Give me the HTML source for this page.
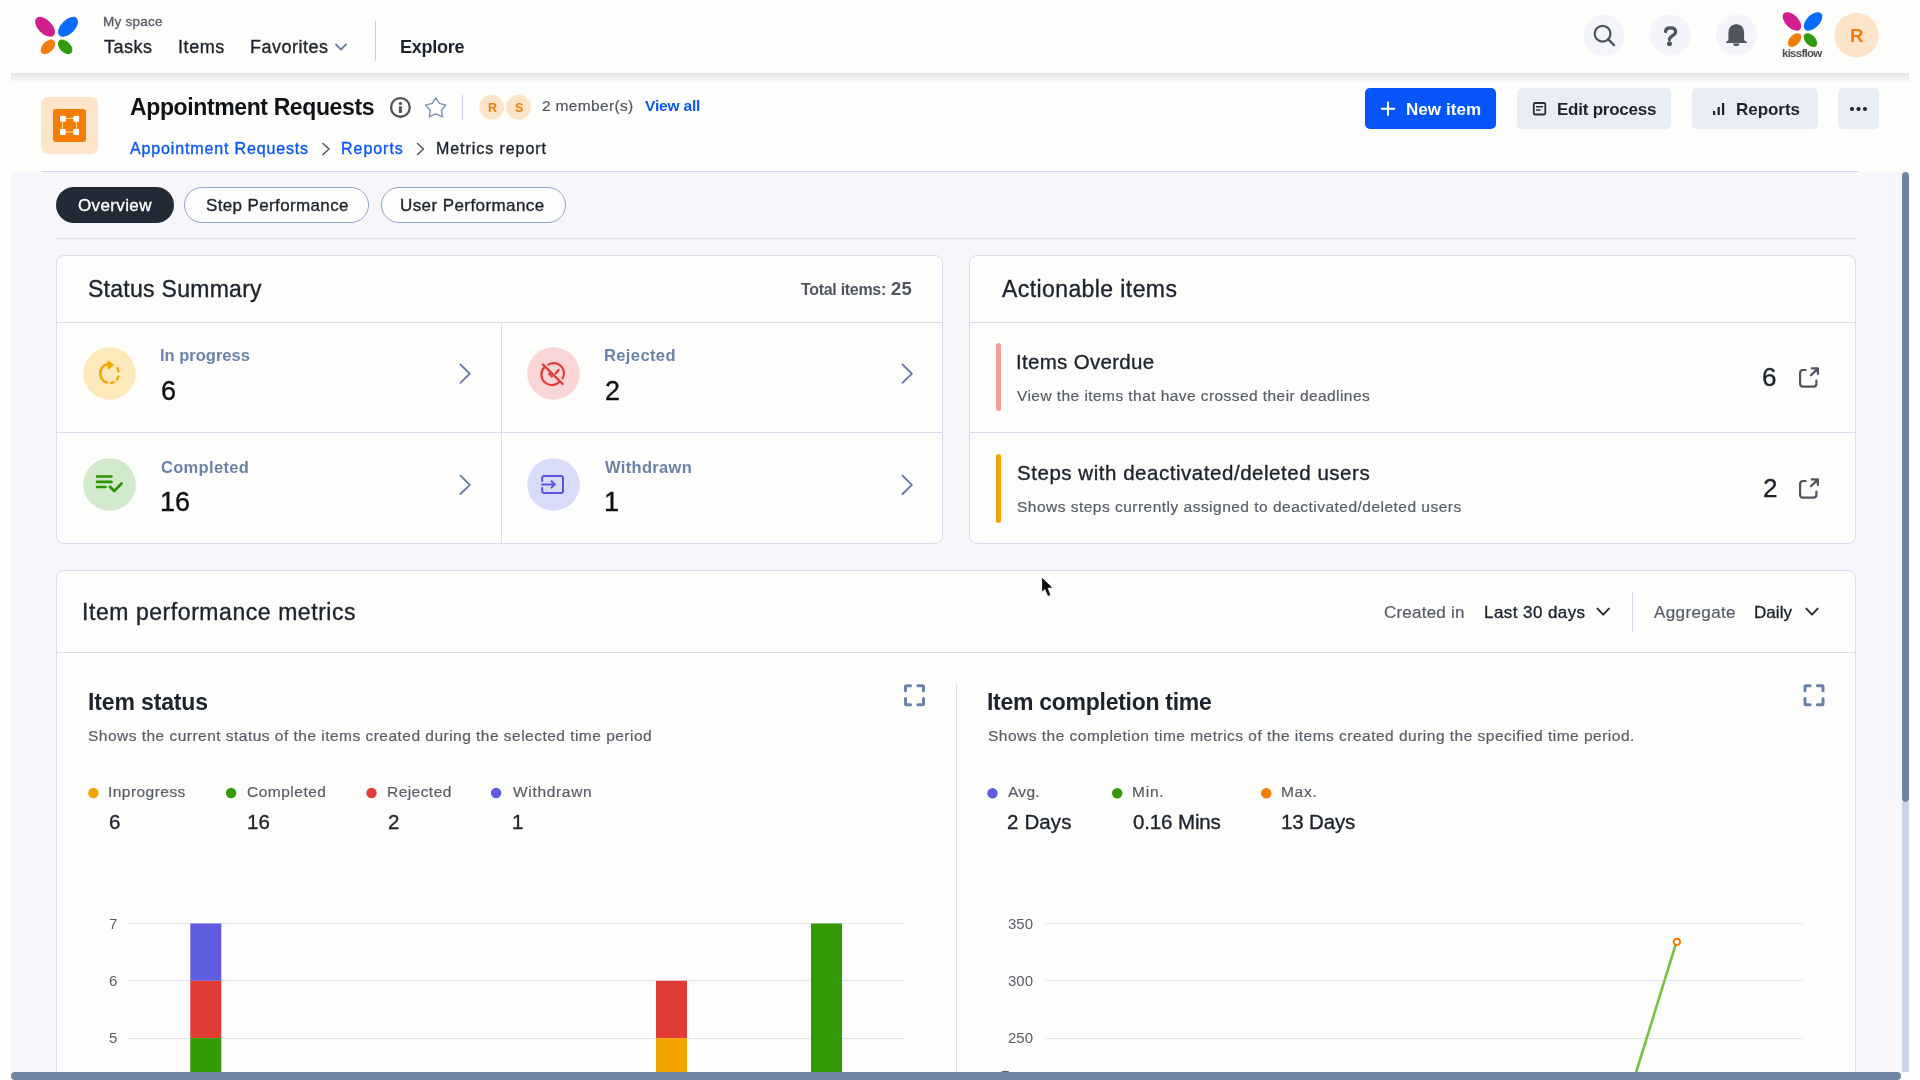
<!DOCTYPE html><html><head><meta charset="utf-8"><style>
html,body{margin:0;padding:0;width:1920px;height:1080px;overflow:hidden;background:#fdfdfc;font-family:"Liberation Sans",sans-serif}
.t{position:absolute;white-space:nowrap;line-height:1;will-change:transform}
</style></head><body>
<div style="position:absolute;left:11px;top:73px;width:1898px;height:9px;background:linear-gradient(#e2e2e0,#f9f9fb)"></div>
<div style="position:absolute;left:11px;top:172px;width:1891px;height:900px;background:#f6f6fb"></div>
<div style="position:absolute;left:41px;top:171px;width:1818px;height:1px;background:#cad8ea"></div>
<div style="position:absolute;left:56px;top:238px;width:1800px;height:1px;background:#dfe5ee"></div>
<div style="position:absolute;left:56px;top:255px;width:887px;height:289px;background:#fdfdfc;border:1px solid #d5deea;border-radius:8px;box-sizing:border-box"></div>
<div style="position:absolute;left:969px;top:255px;width:887px;height:289px;background:#fdfdfc;border:1px solid #d5deea;border-radius:8px;box-sizing:border-box"></div>
<div style="position:absolute;left:56px;top:570px;width:1800px;height:600px;background:#fdfdfc;border:1px solid #d5deea;border-radius:8px;box-sizing:border-box"></div>
<div style="position:absolute;left:56px;top:322px;width:887px;height:1px;background:#d5deea"></div>
<div style="position:absolute;left:56px;top:432px;width:887px;height:1px;background:#d5deea"></div>
<div style="position:absolute;left:501px;top:322px;width:1px;height:222px;background:#d5deea"></div>
<div style="position:absolute;left:969px;top:322px;width:887px;height:1px;background:#d5deea"></div>
<div style="position:absolute;left:969px;top:432px;width:887px;height:1px;background:#d5deea"></div>
<div style="position:absolute;left:56px;top:652px;width:1800px;height:1px;background:#d5deea"></div>
<div style="position:absolute;left:955.5px;top:684px;width:1.5px;height:400px;background:#d9dee6"></div>
<div style="position:absolute;left:375px;top:21px;width:1px;height:40px;background:#c8d2e2"></div>
<div style="position:absolute;left:41px;top:97px;width:57px;height:57px;background:#fee4c9;border-radius:7px"></div>
<div style="position:absolute;left:53px;top:109px;width:33px;height:33px;background:#f57c06;border-radius:3px"></div>
<div style="position:absolute;left:462px;top:95px;width:1px;height:25px;background:#c8d2e2"></div>
<div style="position:absolute;left:1365px;top:88px;width:131px;height:41px;background:#0655f9;border-radius:5px"></div>
<div style="position:absolute;left:1516.6px;top:88px;width:154.5px;height:41px;background:#e9edf4;border-radius:5px"></div>
<div style="position:absolute;left:1692px;top:88px;width:126px;height:41px;background:#e9edf4;border-radius:5px"></div>
<div style="position:absolute;left:1838px;top:88px;width:41px;height:41px;background:#e9edf4;border-radius:5px"></div>
<div style="position:absolute;left:56px;top:187px;width:118px;height:36px;background:#222a35;border-radius:18px"></div>
<div style="position:absolute;left:184px;top:187px;width:185px;height:36px;background:#fdfdfc;border:1px solid #94a6c3;border-radius:18px;box-sizing:border-box"></div>
<div style="position:absolute;left:380.5px;top:187px;width:185px;height:36px;background:#fdfdfc;border:1px solid #94a6c3;border-radius:18px;box-sizing:border-box"></div>
<div style="position:absolute;left:995.7px;top:343px;width:5.2px;height:68.2px;background:#f59a9a;border-radius:3px"></div>
<div style="position:absolute;left:995.7px;top:454px;width:5.2px;height:69px;background:#f0a30a;border-radius:3px"></div>
<div style="position:absolute;left:1631.5px;top:592px;width:1.3px;height:40px;background:#cfd8e6"></div>
<div style="position:absolute;left:128px;top:923.0px;width:776px;height:1px;background:#dde4ee"></div>
<div style="position:absolute;left:128px;top:980.3px;width:776px;height:1px;background:#dde4ee"></div>
<div style="position:absolute;left:128px;top:1037.6px;width:776px;height:1px;background:#dde4ee"></div>
<div style="position:absolute;left:1045px;top:923.0px;width:758px;height:1px;background:#dde4ee"></div>
<div style="position:absolute;left:1045px;top:980.3px;width:758px;height:1px;background:#dde4ee"></div>
<div style="position:absolute;left:1045px;top:1037.6px;width:758px;height:1px;background:#dde4ee"></div>
<svg style="position:absolute;left:0;top:0" width="1920" height="1080" viewBox="0 0 1920 1080"><path d="M336 44.5 L341 49.5 L346 44.5" fill="none" stroke="#6b82a8" stroke-width="1.8" stroke-linecap="round" stroke-linejoin="round"/><ellipse cx="45.05" cy="26.80" rx="12.20" ry="6.90" transform="rotate(45 45.05 26.80)" fill="#d11f8f"/><ellipse cx="68.05" cy="26.80" rx="12.20" ry="6.90" transform="rotate(-45 68.05 26.80)" fill="#0a6cff"/><ellipse cx="47.95" cy="46.90" rx="8.80" ry="5.40" transform="rotate(-45 47.95 46.90)" fill="#f57d0f"/><ellipse cx="65.15" cy="46.90" rx="8.80" ry="5.40" transform="rotate(45 65.15 46.90)" fill="#35990f"/><circle cx="1604" cy="35" r="20.5" fill="#f4f5fa"/><circle cx="1670.3" cy="35" r="20.5" fill="#f4f5fa"/><circle cx="1736.3" cy="35" r="20.5" fill="#f4f5fa"/><circle cx="1602.6" cy="33.7" r="7.9" fill="none" stroke="#50555f" stroke-width="2.2"/><path d="M1608.3 39.4 L1614 45.1" stroke="#50555f" stroke-width="2.4" stroke-linecap="round"/><path d="M1665.6 31.6 C1665.6 28.6 1667.8 27.9 1670.6 27.9 C1673.6 27.9 1675.6 29.4 1675.6 31.8 C1675.6 34.4 1673.2 35.2 1671.6 36.3 C1670.1 37.3 1669.4 38 1669.4 39.6" fill="none" stroke="#50555f" stroke-width="3.3" stroke-linecap="round"/><circle cx="1669.5" cy="43.7" r="2.5" fill="#50555f"/><path d="M1736.3 24.8 C1731 24.8 1729 29 1729 33 L1729 40.5 L1726.5 42.5 L1746.5 42.5 L1743.5 40.5 L1743.5 33 C1743.5 29 1741.5 24.8 1736.3 24.8 Z" fill="#50555f" stroke="#50555f" stroke-width="1.2" stroke-linejoin="round"/><path d="M1733 43.5 L1739.6 43.5 C1739.6 45.5 1738 46 1736.3 46 C1734.6 46 1733 45.5 1733 43.5Z" fill="#50555f"/><ellipse cx="1791.94" cy="21.40" rx="11.35" ry="6.42" transform="rotate(45 1791.94 21.40)" fill="#d11f8f"/><ellipse cx="1813.06" cy="21.40" rx="11.35" ry="6.42" transform="rotate(-45 1813.06 21.40)" fill="#0a6cff"/><ellipse cx="1794.55" cy="40.10" rx="8.18" ry="5.02" transform="rotate(-45 1794.55 40.10)" fill="#f57d0f"/><ellipse cx="1810.45" cy="40.10" rx="8.18" ry="5.02" transform="rotate(45 1810.45 40.10)" fill="#35990f"/><circle cx="1856.5" cy="35.3" r="22.2" fill="#fde3c8"/><rect x="62.5" y="118.5" width="14" height="13.5" fill="none" stroke="#ffe08a" stroke-width="1"/><rect x="60" y="115.8" width="5.8" height="6" rx="1" fill="#fff"/><rect x="73.3" y="115.8" width="5.8" height="6" rx="1" fill="#fff"/><rect x="60" y="129" width="5.8" height="6" rx="1" fill="#fff"/><rect x="73.3" y="129" width="5.8" height="6" rx="1" fill="#fff"/><circle cx="400.4" cy="107.4" r="9.35" fill="none" stroke="#4f545c" stroke-width="2.3"/><rect x="398.9" y="106.3" width="3" height="6.6" rx="0.4" fill="#4f545c"/><circle cx="400.4" cy="103.4" r="1.6" fill="#4f545c"/><path d="M435.7 97.8 L439.4 103.4 L445.8 105.1 L441.4 110.2 L442.6 116.9 L435.7 113.9 L429.4 116.9 L430.3 110.2 L425.4 105.1 L432.2 103.4 Z" fill="none" stroke="#7b8fae" stroke-width="1.35" stroke-linejoin="round"/><circle cx="491.7" cy="107.2" r="13.2" fill="#fdfdfc"/><circle cx="491.7" cy="107.2" r="12.4" fill="#fde3c8"/><circle cx="518.5" cy="107.2" r="13.2" fill="#fdfdfc"/><circle cx="518.5" cy="107.2" r="12.4" fill="#fde3c8"/><path d="M323 143.5 L329 149 L323 154.5" fill="none" stroke="#50555f" stroke-width="1.5" stroke-linecap="round" stroke-linejoin="round"/><path d="M417.5 143.5 L423.5 149 L417.5 154.5" fill="none" stroke="#50555f" stroke-width="1.5" stroke-linecap="round" stroke-linejoin="round"/><path d="M1388 102.5 V115 M1381.8 108.8 H1394.2" stroke="#fff" stroke-width="2" stroke-linecap="round"/><rect x="1533.8" y="103" width="11.5" height="11.5" rx="1.2" fill="none" stroke="#2a2f38" stroke-width="1.8"/><path d="M1536 106.8 H1543 M1536 110 H1540.5" stroke="#2a2f38" stroke-width="1.6"/><rect x="1713" y="111" width="2.2" height="4" fill="#1d232c"/><rect x="1717.6" y="107" width="2.2" height="8" fill="#1d232c"/><rect x="1722" y="103" width="2.2" height="12" fill="#1d232c"/><circle cx="1852" cy="109" r="2.1" fill="#1d232c"/><circle cx="1858.5" cy="109" r="2.1" fill="#1d232c"/><circle cx="1865" cy="109" r="2.1" fill="#1d232c"/><circle cx="109.5" cy="373.5" r="26.3" fill="#fde9b9"/><path d="M460.4 364.5 L469.79999999999995 373.7 L460.4 382.9" fill="none" stroke="#6479a0" stroke-width="1.8" stroke-linecap="round" stroke-linejoin="round"/><circle cx="109.5" cy="484.5" r="26.3" fill="#d3e9cc"/><path d="M460.4 475.6 L469.79999999999995 484.8 L460.4 494.0" fill="none" stroke="#6479a0" stroke-width="1.8" stroke-linecap="round" stroke-linejoin="round"/><circle cx="553.5" cy="373.5" r="26.3" fill="#f9d6d5"/><path d="M902.5 364.5 L911.9 373.7 L902.5 382.9" fill="none" stroke="#6479a0" stroke-width="1.8" stroke-linecap="round" stroke-linejoin="round"/><circle cx="553.5" cy="484.5" r="26.3" fill="#d9dcf9"/><path d="M902.5 475.6 L911.9 484.8 L902.5 494.0" fill="none" stroke="#6479a0" stroke-width="1.8" stroke-linecap="round" stroke-linejoin="round"/><path d="M106.7 382.6 A9.6 9.6 0 0 1 107.6 364.2" fill="none" stroke="#f0a500" stroke-width="2.6" stroke-linecap="round"/><path d="M108 360.8 L113.6 365 L108 369.2 Z" fill="#f0a500" stroke="#f0a500" stroke-width="1" stroke-linejoin="round"/><path d="M117.6 368.2 L118.4 371.4 M118.4 376.6 L117 379.6 M113.6 382.2 L110.8 383.2" stroke="#f0a500" stroke-width="2.4" stroke-linecap="round"/><path d="M97 476.5 H111.5 M97 481.9 H111.5 M97 487 H105.5" stroke="#2e9400" stroke-width="2.6" stroke-linecap="round"/><path d="M110 486.8 L114.2 491 L121.6 483.6" fill="none" stroke="#2e9400" stroke-width="2.8" stroke-linecap="round" stroke-linejoin="round"/><path d="M548.4 364.6 A10.2 10.2 0 0 1 562.6 378.4 M559.5 381.8 A10.2 10.2 0 0 1 544.2 367.5" fill="none" stroke="#e03a3a" stroke-width="2.2" stroke-linecap="round"/><path d="M542.8 364.4 L562.7 384" stroke="#e03a3a" stroke-width="2.2" stroke-linecap="round"/><path d="M549 373.6 L551.8 376.6 M555.6 373.4 L558.6 370" stroke="#e03a3a" stroke-width="2.2" stroke-linecap="round"/><path d="M542.2 481 V478 Q542.2 476 544.2 476 H561 Q563 476 563 478 V491 Q563 493 561 493 H544.2 Q542.2 493 542.2 491 V488" fill="none" stroke="#5a55e0" stroke-width="2" stroke-linecap="round"/><path d="M542 484.4 H554" stroke="#5a55e0" stroke-width="2" stroke-linecap="round"/><path d="M551.5 481.2 L554.8 484.4 L551.5 487.6" fill="none" stroke="#5a55e0" stroke-width="2" stroke-linecap="round" stroke-linejoin="round"/><path d="M1805.7 370 H1803 Q1800.1 370 1800.1 372.9 V383.7 Q1800.1 386.6 1803 386.6 H1813.5 Q1816.4 386.6 1816.4 383.7 V380.7" fill="none" stroke="#50555f" stroke-width="2.2" stroke-linecap="round"/><path d="M1811 375.2 L1817.4 368.9 M1811.8 368.4 H1817.9 V373.9" fill="none" stroke="#50555f" stroke-width="2.2" stroke-linecap="round" stroke-linejoin="round"/><path d="M1805.7 481 H1803 Q1800.1 481 1800.1 483.9 V494.7 Q1800.1 497.6 1803 497.6 H1813.5 Q1816.4 497.6 1816.4 494.7 V491.7" fill="none" stroke="#50555f" stroke-width="2.2" stroke-linecap="round"/><path d="M1811 486.2 L1817.4 479.9 M1811.8 479.4 H1817.9 V484.9" fill="none" stroke="#50555f" stroke-width="2.2" stroke-linecap="round" stroke-linejoin="round"/><path d="M1597.5 608.6 L1603.2 614.6 L1608.9 608.6" fill="none" stroke="#2a2f38" stroke-width="2" stroke-linecap="round" stroke-linejoin="round"/><path d="M1806.3 608.6 L1812 614.6 L1817.7 608.6" fill="none" stroke="#2a2f38" stroke-width="2" stroke-linecap="round" stroke-linejoin="round"/><path d="M905.5 690.8000000000001 V686.7 Q905.5 685.7 906.5 685.7 H910.6 M917.9 685.7 H922.5 Q923.5 685.7 923.5 686.7 V690.8000000000001 M923.5 698.6 V703.7 Q923.5 704.7 922.5 704.7 H917.9 M910.6 704.7 H906.5 Q905.5 704.7 905.5 703.7 V698.6" fill="none" stroke="#6b82a8" stroke-width="3" stroke-linecap="round"/><path d="M1805.0 690.8000000000001 V686.7 Q1805.0 685.7 1806.0 685.7 H1810.1 M1817.4 685.7 H1822.0 Q1823.0 685.7 1823.0 686.7 V690.8000000000001 M1823.0 698.6 V703.7 Q1823.0 704.7 1822.0 704.7 H1817.4 M1810.1 704.7 H1806.0 Q1805.0 704.7 1805.0 703.7 V698.6" fill="none" stroke="#6b82a8" stroke-width="3" stroke-linecap="round"/><circle cx="93.4" cy="793" r="5.2" fill="#f2a500"/><circle cx="231.1" cy="793" r="5.2" fill="#339a06"/><circle cx="371.5" cy="793" r="5.2" fill="#e03c35"/><circle cx="496.1" cy="793" r="5.2" fill="#5f5ce0"/><rect x="190.3" y="923.5" width="31" height="57.3" fill="#5f5ce0"/><rect x="190.3" y="980.8" width="31" height="57.3" fill="#e03c35"/><rect x="190.3" y="1038.1" width="31" height="40" fill="#339a06"/><rect x="656" y="980.8" width="31" height="57.3" fill="#e03c35"/><rect x="656" y="1038.1" width="31" height="40" fill="#f2a500"/><rect x="811" y="923.5" width="31" height="160" fill="#339a06"/><circle cx="992.5" cy="793.3" r="5.2" fill="#5f5ce0"/><circle cx="1117.2" cy="793.3" r="5.2" fill="#339a06"/><circle cx="1266.25" cy="793.3" r="5.2" fill="#f57c00"/><path d="M1635.9 1073 L1676 943.5" stroke="#7ac143" stroke-width="2.6" fill="none"/><circle cx="1676.9" cy="941.9" r="3.2" fill="#fff" stroke="#f57c00" stroke-width="2"/><ellipse cx="1005.3" cy="1073" rx="4.5" ry="2.2" fill="#5b626e"/><path d="M1042.8 579 L1042.8 593 L1045.8 590.4 L1048.8 597.6 L1051.2 596.6 L1048.4 589.4 L1053 589 Z" fill="rgba(0,0,0,0.10)"/><path d="M1042.1 577.8 L1042.1 591.4 L1045 588.9 L1048 596.1 L1050.4 595 L1047.6 588 L1052.2 587.6 Z" fill="#0a0d12" stroke="#ffffff" stroke-width="2.2" stroke-linejoin="round" paint-order="stroke"/></svg>
<div class="t" style="left:103.30px;top:14.77px;font-size:13.5px;color:#575d67;-webkit-text-stroke:0.35px currentColor;letter-spacing:0.234px;">My space</div>
<div class="t" style="left:104.20px;top:37.96px;font-size:18px;color:#1d232c;-webkit-text-stroke:0.35px currentColor;letter-spacing:0.522px;">Tasks</div>
<div class="t" style="left:177.70px;top:37.96px;font-size:18px;color:#1d232c;-webkit-text-stroke:0.35px currentColor;letter-spacing:0.573px;">Items</div>
<div class="t" style="left:249.60px;top:37.96px;font-size:18px;color:#1d232c;-webkit-text-stroke:0.35px currentColor;letter-spacing:0.485px;">Favorites</div>
<div class="t" style="left:400.00px;top:37.96px;font-size:18px;color:#1d232c;font-weight:700;letter-spacing:-0.269px;">Explore</div>
<div class="t" style="left:1782.20px;top:48.47px;font-size:11.5px;color:#4d4f55;font-weight:700;letter-spacing:-0.733px;">kissflow</div>
<div class="t" style="left:1850.00px;top:26.54px;font-size:18.5px;color:#f27b0a;font-weight:700;">R</div>
<div class="t" style="left:129.90px;top:95.73px;font-size:23px;color:#0f1318;font-weight:700;letter-spacing:-0.381px;">Appointment Requests</div>
<div class="t" style="left:487.80px;top:101.62px;font-size:12.5px;color:#f07d0b;font-weight:700;">R</div>
<div class="t" style="left:514.60px;top:101.62px;font-size:12.5px;color:#f07d0b;font-weight:700;">S</div>
<div class="t" style="left:541.90px;top:98.08px;font-size:15.5px;color:#50555f;-webkit-text-stroke:0.2px currentColor;letter-spacing:0.342px;">2 member(s)</div>
<div class="t" style="left:645.00px;top:98.08px;font-size:15.5px;color:#0a58f5;font-weight:700;letter-spacing:-0.182px;">View all</div>
<div class="t" style="left:130.30px;top:140.66px;font-size:16px;color:#0a58f5;-webkit-text-stroke:0.35px currentColor;letter-spacing:0.854px;">Appointment Requests</div>
<div class="t" style="left:341.20px;top:140.66px;font-size:16px;color:#0a58f5;-webkit-text-stroke:0.35px currentColor;letter-spacing:0.963px;">Reports</div>
<div class="t" style="left:436.20px;top:140.66px;font-size:16px;color:#1d232c;-webkit-text-stroke:0.35px currentColor;letter-spacing:0.934px;">Metrics report</div>
<div class="t" style="left:1405.60px;top:100.81px;font-size:17px;color:#ffffff;font-weight:700;letter-spacing:0.055px;">New item</div>
<div class="t" style="left:1556.80px;top:100.81px;font-size:17px;color:#1d232c;font-weight:700;letter-spacing:-0.234px;">Edit process</div>
<div class="t" style="left:1735.70px;top:100.81px;font-size:17px;color:#1d232c;font-weight:700;letter-spacing:-0.046px;">Reports</div>
<div class="t" style="left:77.80px;top:196.81px;font-size:17px;color:#ffffff;-webkit-text-stroke:0.35px currentColor;letter-spacing:0.376px;">Overview</div>
<div class="t" style="left:205.80px;top:196.81px;font-size:17px;color:#1d232c;-webkit-text-stroke:0.35px currentColor;letter-spacing:0.363px;">Step Performance</div>
<div class="t" style="left:400.00px;top:196.81px;font-size:17px;color:#1d232c;-webkit-text-stroke:0.35px currentColor;letter-spacing:0.418px;">User Performance</div>
<div class="t" style="left:87.60px;top:277.73px;font-size:23px;color:#1d232c;-webkit-text-stroke:0.35px currentColor;letter-spacing:0.277px;">Status Summary</div>
<div class="t" style="left:800.90px;top:281.66px;font-size:16px;color:#50555f;font-weight:700;letter-spacing:-0.307px;">Total items:</div>
<div class="t" style="left:890.50px;top:279.54px;font-size:18.5px;color:#50555f;font-weight:700;letter-spacing:0.211px;">25</div>
<div class="t" style="left:160.30px;top:347.23px;font-size:16.5px;color:#6b82a8;font-weight:700;letter-spacing:0.002px;">In progress</div>
<div class="t" style="left:161.30px;top:378.34px;font-size:27px;color:#0d1117;-webkit-text-stroke:0.35px currentColor;">6</div>
<div class="t" style="left:161.30px;top:459.23px;font-size:16.5px;color:#6b82a8;font-weight:700;letter-spacing:0.315px;">Completed</div>
<div class="t" style="left:160.30px;top:489.34px;font-size:27px;color:#0d1117;-webkit-text-stroke:0.35px currentColor;">16</div>
<div class="t" style="left:604.00px;top:347.23px;font-size:16.5px;color:#6b82a8;font-weight:700;letter-spacing:0.386px;">Rejected</div>
<div class="t" style="left:605.00px;top:378.34px;font-size:27px;color:#0d1117;-webkit-text-stroke:0.35px currentColor;">2</div>
<div class="t" style="left:605.00px;top:459.23px;font-size:16.5px;color:#6b82a8;font-weight:700;letter-spacing:0.325px;">Withdrawn</div>
<div class="t" style="left:604.00px;top:489.34px;font-size:27px;color:#0d1117;-webkit-text-stroke:0.35px currentColor;">1</div>
<div class="t" style="left:1001.60px;top:277.73px;font-size:23px;color:#1d232c;-webkit-text-stroke:0.35px currentColor;letter-spacing:0.410px;">Actionable items</div>
<div class="t" style="left:1016.20px;top:351.85px;font-size:20.5px;color:#1d232c;-webkit-text-stroke:0.35px currentColor;letter-spacing:0.305px;">Items Overdue</div>
<div class="t" style="left:1017.00px;top:388.08px;font-size:15.5px;color:#575d67;-webkit-text-stroke:0.2px currentColor;letter-spacing:0.435px;">View the items that have crossed their deadlines</div>
<div class="t" style="left:1017.20px;top:462.85px;font-size:20.5px;color:#1d232c;-webkit-text-stroke:0.35px currentColor;letter-spacing:0.536px;">Steps with deactivated/deleted users</div>
<div class="t" style="left:1017.00px;top:499.08px;font-size:15.5px;color:#575d67;-webkit-text-stroke:0.2px currentColor;letter-spacing:0.483px;">Shows steps currently assigned to deactivated/deleted users</div>
<div class="t" style="left:1762.30px;top:364.19px;font-size:26px;color:#1d232c;-webkit-text-stroke:0.35px currentColor;">6</div>
<div class="t" style="left:1762.90px;top:475.19px;font-size:26px;color:#1d232c;-webkit-text-stroke:0.35px currentColor;">2</div>
<div class="t" style="left:82.20px;top:600.73px;font-size:23px;color:#1d232c;-webkit-text-stroke:0.35px currentColor;letter-spacing:0.559px;">Item performance metrics</div>
<div class="t" style="left:1384.20px;top:603.81px;font-size:17px;color:#575d67;-webkit-text-stroke:0.2px currentColor;letter-spacing:0.213px;">Created in</div>
<div class="t" style="left:1483.80px;top:603.81px;font-size:17px;color:#1d232c;-webkit-text-stroke:0.35px currentColor;letter-spacing:0.428px;">Last 30 days</div>
<div class="t" style="left:1654.10px;top:603.81px;font-size:17px;color:#575d67;-webkit-text-stroke:0.2px currentColor;letter-spacing:0.388px;">Aggregate</div>
<div class="t" style="left:1754.40px;top:603.81px;font-size:17px;color:#1d232c;-webkit-text-stroke:0.35px currentColor;letter-spacing:0.054px;">Daily</div>
<div class="t" style="left:87.90px;top:690.73px;font-size:23px;color:#1d232c;font-weight:700;letter-spacing:-0.138px;">Item status</div>
<div class="t" style="left:88.40px;top:728.08px;font-size:15.5px;color:#575d67;-webkit-text-stroke:0.2px currentColor;letter-spacing:0.478px;">Shows the current status of the items created during the selected time period</div>
<div class="t" style="left:107.90px;top:784.08px;font-size:15.5px;color:#575d67;-webkit-text-stroke:0.2px currentColor;letter-spacing:0.458px;">Inprogress</div>
<div class="t" style="left:108.70px;top:811.85px;font-size:20.5px;color:#1d232c;-webkit-text-stroke:0.35px currentColor;">6</div>
<div class="t" style="left:247.30px;top:784.08px;font-size:15.5px;color:#575d67;-webkit-text-stroke:0.2px currentColor;letter-spacing:0.495px;">Completed</div>
<div class="t" style="left:247.10px;top:811.85px;font-size:20.5px;color:#1d232c;-webkit-text-stroke:0.35px currentColor;">16</div>
<div class="t" style="left:386.90px;top:784.08px;font-size:15.5px;color:#575d67;-webkit-text-stroke:0.2px currentColor;letter-spacing:0.449px;">Rejected</div>
<div class="t" style="left:387.70px;top:811.85px;font-size:20.5px;color:#1d232c;-webkit-text-stroke:0.35px currentColor;">2</div>
<div class="t" style="left:512.60px;top:784.08px;font-size:15.5px;color:#575d67;-webkit-text-stroke:0.2px currentColor;letter-spacing:0.676px;">Withdrawn</div>
<div class="t" style="left:512.40px;top:811.85px;font-size:20.5px;color:#1d232c;-webkit-text-stroke:0.35px currentColor;">1</div>
<div class="t" style="left:108.60px;top:915.50px;font-size:15px;color:#575d67;">7</div>
<div class="t" style="left:108.60px;top:972.50px;font-size:15px;color:#575d67;">6</div>
<div class="t" style="left:108.60px;top:1029.50px;font-size:15px;color:#575d67;">5</div>
<div class="t" style="left:987.20px;top:690.73px;font-size:23px;color:#1d232c;font-weight:700;letter-spacing:-0.276px;">Item completion time</div>
<div class="t" style="left:988.00px;top:728.08px;font-size:15.5px;color:#575d67;-webkit-text-stroke:0.2px currentColor;letter-spacing:0.487px;">Shows the completion time metrics of the items created during the specified time period.</div>
<div class="t" style="left:1008.00px;top:784.08px;font-size:15.5px;color:#575d67;-webkit-text-stroke:0.2px currentColor;letter-spacing:0.290px;">Avg.</div>
<div class="t" style="left:1007.00px;top:811.85px;font-size:20.5px;color:#1d232c;-webkit-text-stroke:0.35px currentColor;letter-spacing:0.140px;">2 Days</div>
<div class="t" style="left:1132.00px;top:784.08px;font-size:15.5px;color:#575d67;-webkit-text-stroke:0.2px currentColor;letter-spacing:0.775px;">Min.</div>
<div class="t" style="left:1133.00px;top:811.85px;font-size:20.5px;color:#1d232c;-webkit-text-stroke:0.35px currentColor;letter-spacing:-0.128px;">0.16 Mins</div>
<div class="t" style="left:1281.00px;top:784.08px;font-size:15.5px;color:#575d67;-webkit-text-stroke:0.2px currentColor;letter-spacing:0.706px;">Max.</div>
<div class="t" style="left:1281.00px;top:811.85px;font-size:20.5px;color:#1d232c;-webkit-text-stroke:0.35px currentColor;letter-spacing:-0.159px;">13 Days</div>
<div class="t" style="left:1008.30px;top:915.50px;font-size:15px;color:#575d67;">350</div>
<div class="t" style="left:1008.30px;top:972.50px;font-size:15px;color:#575d67;">300</div>
<div class="t" style="left:1008.30px;top:1029.50px;font-size:15px;color:#575d67;">250</div>
<div style="position:absolute;left:1902px;top:802px;width:7px;height:270px;background:#c8d6ea"></div>
<div style="position:absolute;left:1902px;top:172px;width:7px;height:630px;background:#7184a3;border-radius:4px"></div>
<div style="position:absolute;left:11px;top:1072px;width:1890px;height:8px;background:#7184a3;border-radius:4px"></div>
</body></html>
